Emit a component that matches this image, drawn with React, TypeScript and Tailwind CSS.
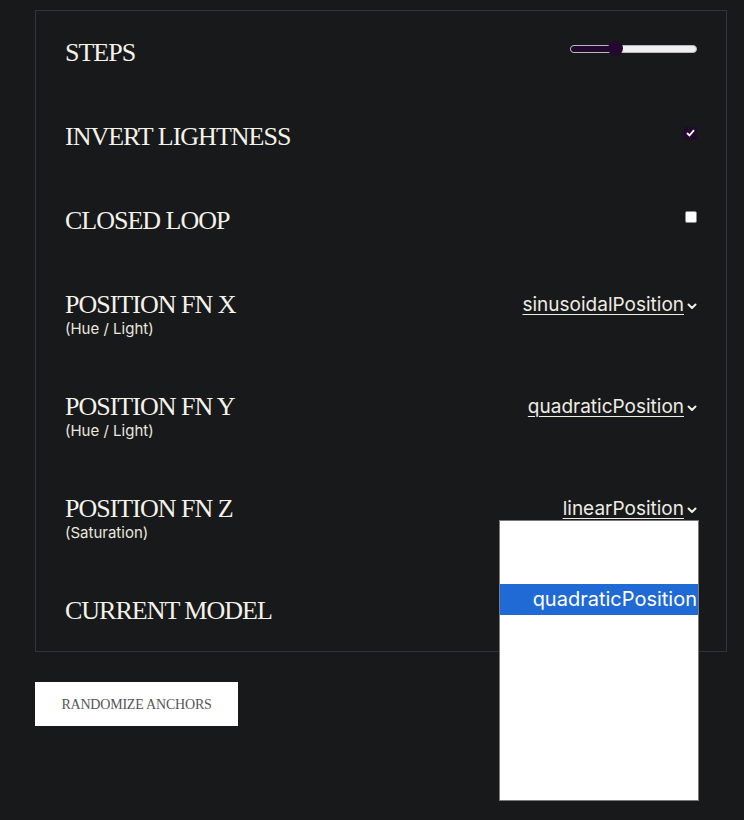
import React from "react";

const labelFont = { fontFamily: '"Liberation Serif", "Times New Roman", serif' };
const sansFont = { fontFamily: 'Inter, "Liberation Sans", sans-serif' };

const Chevron = () => (
  <svg width="10" height="7" viewBox="0 0 10 7" className="ml-[3px] mt-[2px]">
    <path d="M1.5 1.5 L5 5 L8.5 1.5" stroke="#f1efe6" strokeWidth="2" fill="none" strokeLinecap="round" strokeLinejoin="round" />
  </svg>
);

const Label: React.FC<{ text: string; sub?: string }> = ({ text, sub }) => (
  <div className="flex flex-col">
    <span className="text-[26px] leading-[30px] tracking-[-1px] text-[#f4f2e9]" style={labelFont}>
      {text}
    </span>
    {sub && (
      <span className="text-[15px] leading-[18px] text-[#e9e7de]" style={sansFont}>
        {sub}
      </span>
    )}
  </div>
);

const SelectFake: React.FC<{ value: string }> = ({ value }) => (
  <div className="flex items-center h-[30px]">
    <span className="text-[19px] underline underline-offset-[3px] decoration-1 text-[#eeece3]" style={sansFont}>
      {value}
    </span>
    <Chevron />
  </div>
);

const options = [
  "linearPosition",
  "sinusoidalPosition",
  "quadraticPosition",
  "cubicPosition",
  "quarticPosition",
  "quinticPosition",
  "exponentialPosition",
  "circularPosition",
  "arcPosition",
];

export default function App() {
  return (
    <div className="relative min-h-[820px] bg-[#18191b] pt-[10px] pl-[35px]">
      <div className="w-[692px] border border-[#333437] px-[29px] pt-[27px] pb-[25px] flex flex-col gap-[54px]">
        <div className="flex justify-between items-center">
          <Label text="STEPS" />
          <div className="relative w-[127px] h-[8px] mb-[8px] rounded-full bg-[#efefef] border border-[#b9b6c0]">
            <div className="absolute left-0 top-0 h-full w-[45px] rounded-l-full bg-[#23082f]" />
            <div className="absolute left-[37px] top-[-5px] w-[15px] h-[15px] rounded-full bg-[#23082f]" />
          </div>
        </div>

        <div className="flex justify-between items-center">
          <Label text="INVERT LIGHTNESS" />
          <div className="w-[13px] h-[13px] mb-[8px] rounded-[2px] bg-[#23082f] flex items-center justify-center">
            <svg width="9" height="8" viewBox="0 0 9 8">
              <path d="M1 4 L3.5 6.5 L8 1.2" stroke="white" strokeWidth="1.8" fill="none" />
            </svg>
          </div>
        </div>

        <div className="flex justify-between items-center">
          <Label text="CLOSED LOOP" />
          <div className="w-[12px] h-[12px] mb-[8px] rounded-[2px] bg-white border border-[#8a8a8a]" />
        </div>

        <div className="flex justify-between items-start">
          <Label text="POSITION FN X" sub="(Hue / Light)" />
          <SelectFake value="sinusoidalPosition" />
        </div>

        <div className="flex justify-between items-start">
          <Label text="POSITION FN Y" sub="(Hue / Light)" />
          <SelectFake value="quadraticPosition" />
        </div>

        <div className="flex justify-between items-start">
          <Label text="POSITION FN Z" sub="(Saturation)" />
          <SelectFake value="linearPosition" />
        </div>

        <div className="flex justify-between items-center">
          <Label text="CURRENT MODEL" />
        </div>
      </div>

      <button className="mt-[30px] w-[203px] h-[44px] bg-white text-[14px] text-[#555] tracking-[-0.2px]" style={labelFont}>
        RANDOMIZE ANCHORS
      </button>

      <div className="absolute left-[499px] top-[520px] w-[200px] h-[281px] bg-white border border-[#7a7a7a] pt-[1px] flex flex-col">
        {options.map((o) => (
          <div
            key={o}
            className={
              o === "quadraticPosition"
                ? "h-[31px] flex items-center justify-end pr-[1px] bg-[#1f6ad4] text-white text-[20px]"
                : "h-[31px] flex items-center justify-end pr-[1px] text-white text-[20px]"
            }
            style={sansFont}
          >
            {o}
          </div>
        ))}
      </div>
    </div>
  );
}
